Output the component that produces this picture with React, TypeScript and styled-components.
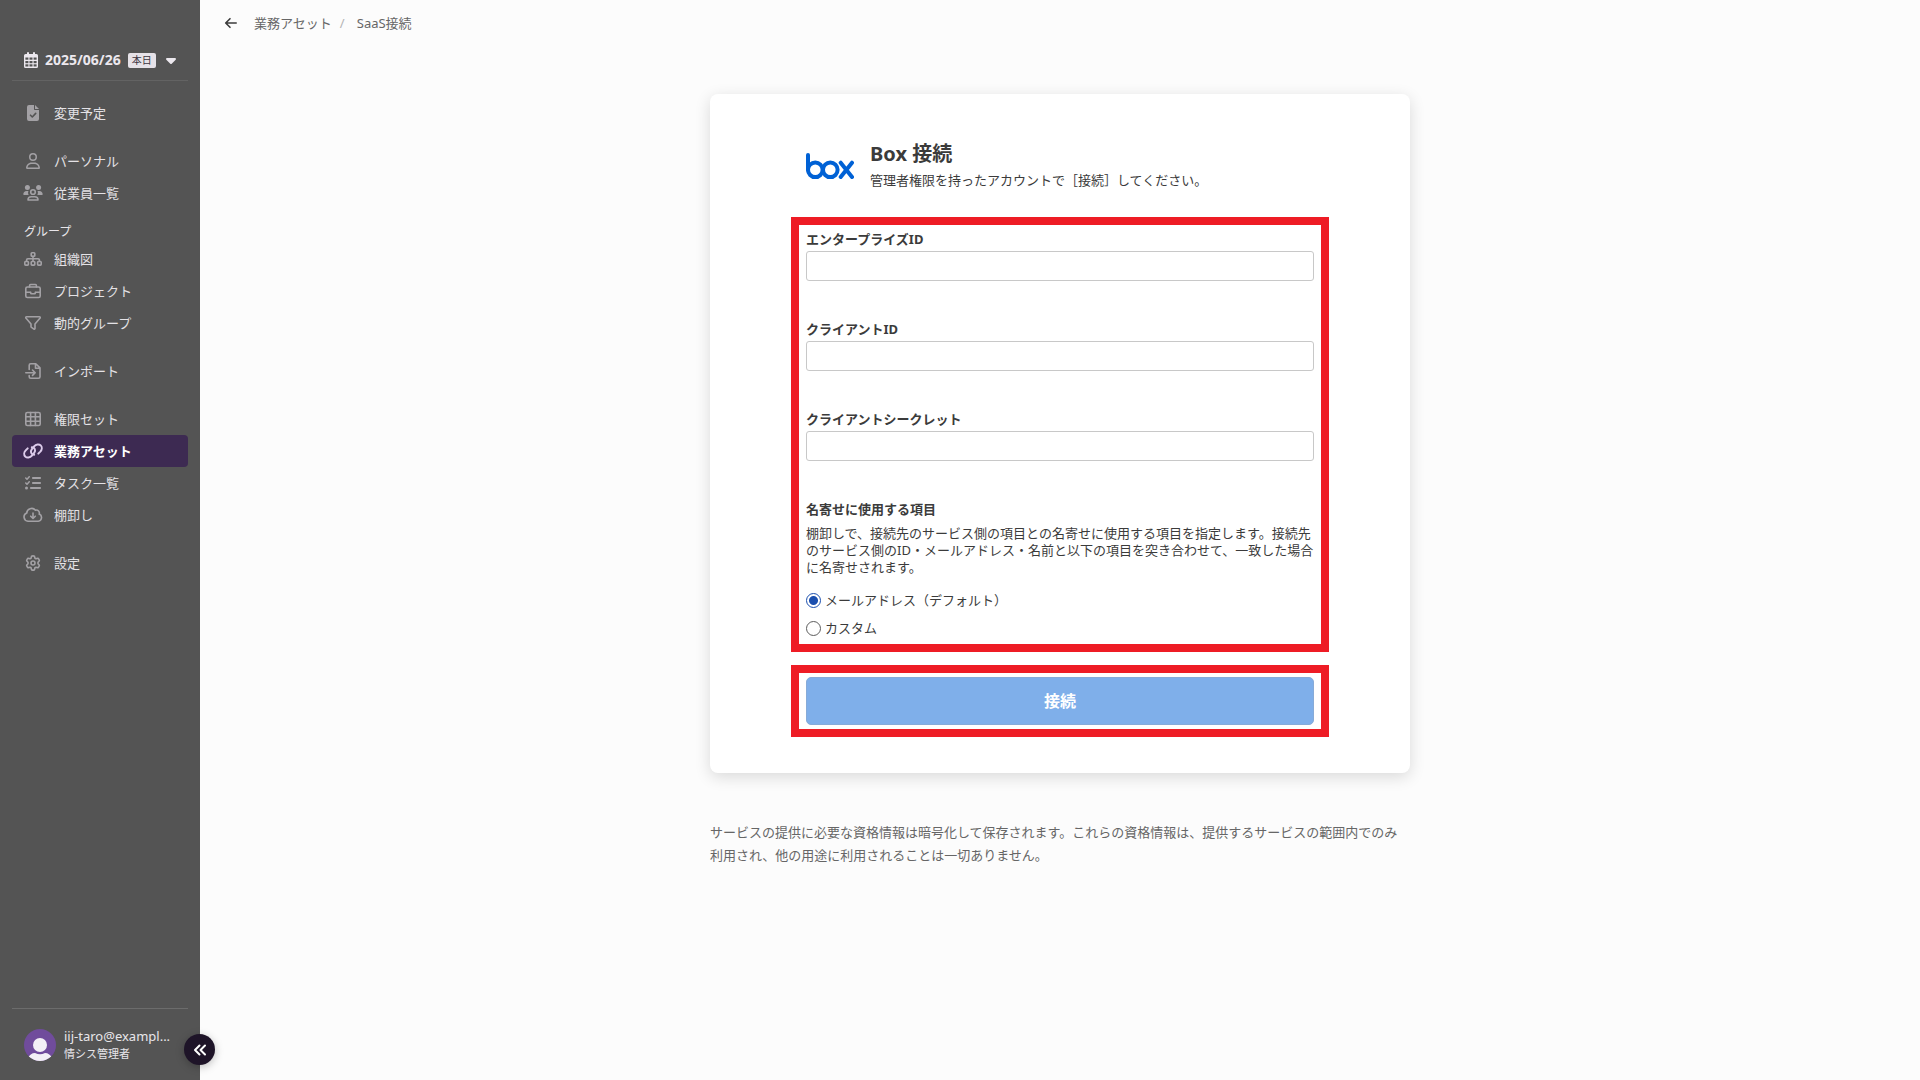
import React, { useState } from "react";
import styled, { createGlobalStyle, css } from "styled-components";
import { FaListCheck, FaRegUser, FaCaretDown } from "react-icons/fa6";

const GlobalStyle = createGlobalStyle`
  *, *::before, *::after { box-sizing: border-box; }
  body {
    margin: 0;
    background: #fcfcfc;
    color: #3b3b3b;
    font-family: "Noto Sans", "Noto Sans CJK JP", sans-serif;
    font-size: 13px;
    line-height: 20px;
    text-spacing-trim: space-all;
  }
  h1, p, ul { margin: 0; padding: 0; }
  ul { list-style: none; }
  button, input { font: inherit; }
`;

const Shell = styled.div`
  display: grid;
  grid-template-columns: 200px minmax(0, 1fr);
  min-height: 100vh;
`;

const Sidebar = styled.aside`
  position: sticky;
  top: 0;
  display: flex;
  flex-direction: column;
  height: 100vh;
  padding: 0 12px;
  background: #545454;
  color: #e8e6ea;
`;

const DateButton = styled.button`
  display: flex;
  align-items: center;
  gap: 7px;
  height: 81px;
  padding: 40px 12px 0;
  border: 0;
  border-bottom: 1px solid #636363;
  background: none;
  color: #ece8ee;
  font-size: 14px;
  font-weight: 700;
  white-space: nowrap;
  cursor: pointer;
  svg { flex: none; }
`;

const TodayBadge = styled.span`
  flex: none;
  padding: 0 4px;
  border-radius: 2px;
  background: #e6e2e8;
  color: #3c3541;
  font-size: 10px;
  font-weight: 400;
  line-height: 15px;
`;

const Nav = styled.nav`
  display: flex;
  flex: 1;
  flex-direction: column;
  gap: 16px;
  padding-top: 16px;
`;

const NavGroup = styled.div<{ $titled?: boolean }>`
  margin-top: ${(p) => (p.$titled ? "-16px" : "0")};
`;

const GroupTitle = styled.h2`
  margin: 0;
  padding: 14px 12px 2px;
  font-size: 12px;
  font-weight: 400;
  line-height: 18px;
`;

const NavLink = styled.a<{ $active?: boolean }>`
  display: flex;
  align-items: center;
  gap: 12px;
  height: 32px;
  padding: 0 12px;
  border-radius: 4px;
  color: #e4e2e6;
  text-decoration: none;
  svg { flex: none; color: #a3a1a5; }
  ${(p) =>
    p.$active &&
    css`
      background: #3d2a52;
      color: #fff;
      font-weight: 700;
      svg { color: #dccbea; }
    `}
`;

const IconSlot = styled.span`
  display: flex;
  justify-content: center;
  width: 18px;
`;

const UserPanel = styled.div`
  display: flex;
  align-items: center;
  gap: 8px;
  height: 72px;
  padding: 0 12px;
  border-top: 1px solid #6c6c6c;
`;

const UserText = styled.div`
  min-width: 0;
  white-space: nowrap;
`;

const UserMail = styled.p`
  line-height: 18px;
`;

const UserRole = styled.p`
  font-size: 11px;
  line-height: 17px;
`;

const CollapseButton = styled.button`
  position: absolute;
  right: -15px;
  bottom: 15px;
  display: flex;
  align-items: center;
  justify-content: center;
  width: 31px;
  height: 31px;
  padding: 0;
  border: 0;
  border-radius: 50%;
  background: #1e1428;
  color: #fff;
  box-shadow: 0 2px 8px rgba(0, 0, 0, 0.25);
  cursor: pointer;
`;

const Main = styled.main`
  display: flex;
  flex-direction: column;
`;

const Breadcrumb = styled.nav`
  display: flex;
  align-items: center;
  height: 46px;
  padding: 0 24px;
  color: #666;
  a { color: inherit; text-decoration: none; }
`;

const BackButton = styled.button`
  display: flex;
  margin-right: 16px;
  padding: 0;
  border: 0;
  background: none;
  color: #3b3b3b;
  cursor: pointer;
`;

const Slash = styled.span`
  width: 25px;
  padding-left: 8px;
  color: #b4b4b4;
`;

const Content = styled.div`
  width: 100%;
  max-width: 700px;
  margin: 48px auto;
`;

const Card = styled.section`
  padding: 46px 81px 36px;
  border-radius: 8px;
  background: #fff;
  box-shadow: 0 4px 16px rgba(0, 0, 0, 0.14);
`;

const CardHeader = styled.header`
  display: flex;
  align-items: center;
  gap: 16px;
  padding: 0 15px;
  margin-bottom: 27px;
`;

const Title = styled.h1`
  margin-bottom: 2px;
  font-size: 20px;
  font-weight: 700;
  line-height: 28px;
`;

const Lead = styled.p`
  line-height: 20px;
`;

const Highlight = styled.div`
  padding: 4px 7px 6px;
  border: 8px solid #ee1c25;
`;

const SubmitHighlight = styled(Highlight)`
  margin-top: 13px;
  padding: 4px 7px;
`;

const Field = styled.div`
  display: flex;
  flex-direction: column;
  gap: 2px;
  margin-bottom: 38px;
`;

const Label = styled.label`
  font-weight: 700;
`;

const TextInput = styled.input`
  width: 100%;
  height: 30px;
  padding: 0 8px;
  border: 1px solid #c8c8c8;
  border-radius: 3px;
  background: #fff;
  outline: none;
  &:focus { border-color: #1b4fae; }
`;

const Options = styled.fieldset`
  display: flex;
  flex-direction: column;
  gap: 8px;
  min-width: 0;
  margin: 0;
  padding: 0;
  border: 0;
`;

const Legend = styled.legend`
  margin-bottom: 6px;
  padding: 0;
  font-weight: 700;
`;

const Help = styled.p`
  margin-bottom: 6px;
  line-height: 17px;
`;

const RadioLabel = styled.label`
  display: flex;
  align-items: center;
  gap: 4px;
`;

const Radio = styled.input`
  appearance: none;
  width: 15px;
  height: 15px;
  margin: 0;
  border: 1px solid #5c5c5c;
  border-radius: 50%;
  background: #fff;
  &:checked {
    border-color: #1b4fae;
    background: radial-gradient(circle, #1b4fae 0 4px, #fff 5px);
  }
`;

const Submit = styled.button`
  display: block;
  width: 100%;
  height: 48px;
  border: 1px solid #87abd8;
  border-radius: 5px;
  background: #7fafea;
  color: #fff;
  font-size: 16px;
  font-weight: 700;
`;

const Note = styled.p`
  margin-top: 48px;
  color: #666;
  line-height: 23px;
`;

type IconProps = { children: React.ReactNode; width?: number; height?: number; box?: string };

const Line = ({ children, width = 16, height = 16, box = "0 0 16 16" }: IconProps) => (
  <svg
    width={width}
    height={height}
    viewBox={box}
    fill="none"
    stroke="currentColor"
    strokeWidth="1.6"
    strokeLinecap="round"
    strokeLinejoin="round"
    aria-hidden="true"
  >
    {children}
  </svg>
);

const CalendarIcon = () => (
  <Line width={14} box="0 0 14 16">
    <path d="M1.500 2h11A1.500 1.500 0 0 1 14 3.500v11a1.500 1.500 0 0 1-1.500 1.500h-11A1.500 1.500 0 0 1 0 14.500v-11A1.500 1.500 0 0 1 1.500 2z" fill="currentColor" stroke="none" />
    <path d="M4 1v2M10 1v2" strokeWidth="2" />
    <g fill="#545454" stroke="none">
      {[5.5, 9, 12.3].map((y) =>
        [1.4, 5.5, 9.6].map((x) => <rect key={`${x}-${y}`} x={x} y={y} width="3" height="2.200" />)
      )}
    </g>
  </Line>
);

const FileCheckIcon = () => (
  <Line>
    <path d="M4 0h5v4.2a.8.8 0 0 0 .8.8H14v9a2 2 0 0 1-2 2H4a2 2 0 0 1-2-2V2a2 2 0 0 1 2-2z" fill="currentColor" stroke="none" />
    <path d="M10 0l4 4h-4z" fill="currentColor" stroke="none" />
    <path d="M5.500 10.200l1.800 1.800 3.400-3.600" stroke="#545454" />
  </Line>
);

const UsersIcon = () => (
  <Line width={20} box="0 0 20 16">
    <g fill="currentColor" stroke="none">
      <circle cx="4.400" cy="2.600" r="2.500" />
      <circle cx="15.600" cy="2.600" r="2.500" />
      <path d="M.3 9.200c0-1.900 1.400-3.200 3.200-3.200h2c-.7 1.300-.5 2.800.2 4H1a.8.8 0 0 1-.7-.8z" />
      <path d="M19.700 9.200c0-1.900-1.400-3.200-3.200-3.200h-2c.7 1.300.5 2.800-.2 4H19a.8.8 0 0 0 .7-.8z" />
    </g>
    <circle cx="10" cy="7" r="2.300" />
    <path d="M5 15c0-2 1.400-3.200 3.200-3.200h3.600c1.800 0 3.200 1.200 3.200 3.200z" />
  </Line>
);

const SitemapIcon = () => (
  <Line width={18} height={14} box="0 0 18 14">
    <rect x="7.200" y=".8" width="3.600" height="3.400" rx=".8" />
    <rect x=".8" y="9.500" width="3.600" height="3.600" rx=".8" />
    <rect x="7.200" y="9.500" width="3.600" height="3.600" rx=".8" />
    <rect x="13.600" y="9.500" width="3.600" height="3.600" rx=".8" />
    <path d="M9 4.200v5M2.600 9V8a1.200 1.200 0 0 1 1.200-1.200h10.400A1.200 1.200 0 0 1 15.400 8v1" />
  </Line>
);

const BriefcaseIcon = () => (
  <Line>
    <rect x=".8" y="4" width="14.400" height="10.500" rx="1.600" />
    <path d="M4.600 4V2.500c0-.6.4-1 1-1h4.800c.6 0 1 .4 1 1V4M.8 9.200h4.700M10.500 9.200h4.700M5.700 9.200v.8c0 .4.300.7.700.7h3.200c.4 0 .7-.3.700-.7v-.8" />
  </Line>
);

const FilterIcon = () => (
  <Line>
    <path d="M1.500 1.800h13c.7 0 1 .8.6 1.300L10 9v4.500c0 .6-.6.900-1.100.6l-2.400-1.700a1.200 1.200 0 0 1-.5-1V9L.9 3.100c-.4-.5-.1-1.300.6-1.300z" />
  </Line>
);

const ImportIcon = () => (
  <Line>
    <path d="M4.200 6.500V2.300c0-.8.600-1.500 1.500-1.500h5.100l4.200 4.100v8.800c0 .8-.7 1.500-1.500 1.500H5.700c-.9 0-1.500-.7-1.500-1.500v-1.200M10.500 1v4.300h4.300" />
    <path d="M.8 9.700h9M7.500 7l2.700 2.700-2.700 2.700" />
  </Line>
);

const TableIcon = () => (
  <Line>
    <rect x=".8" y="1.500" width="14.400" height="13" rx="1.600" />
    <path d="M.8 5.800h14.400M.8 10.200h14.400M5.600 1.500v13M10.400 1.500v13" />
  </Line>
);

const LinkIcon = () => (
  <Line width={20} box="0 0 20 16">
    <g strokeWidth="2">
      <path d="M11.200 11.700C8.200 11.700 7 8.600 8.700 6.300l2.400-3C13 1 16.200.9 17.700 2.400c1.600 1.600 1.400 4.300-.4 6.200l-2 2" />
      <path d="M8.800 4.300c3 0 4.200 3.100 2.500 5.400l-2.400 3C7 15 3.800 15.100 2.300 13.600.7 12 .9 9.300 2.700 7.400l2-2" />
    </g>
  </Line>
);

const CloudIcon = () => (
  <Line width={20} box="0 0 20 16">
    <path d="M5 14.200a4.200 4.200 0 0 1-1.300-8.100A5 5 0 0 1 12.500 3.200a3 3 0 0 1 3.700 3.900 3.700 3.700 0 0 1-.9 7.100z" />
    <path d="M10 6v5.300M7.700 9.200l2.300 2.300 2.300-2.300" />
  </Line>
);

const GearIcon = () => (
  <Line>
    <path d="M6.500 1.300Q8 .5 9.500 1.300L9.900 3.200l1.100.6 1.900-.6q1.400 1 1.500 2.600L13 7.200v1.600l1.400 1.400q-.2 1.600-1.500 2.600l-1.900-.6-1.100.6-.4 1.900q-1.500.8-3 0l-.4-1.900-1.100-.6-1.900.6q-1.300-1-1.500-2.600L3 8.800V7.200L1.600 5.800q.2-1.600 1.500-2.600l1.900.6 1.100-.6z" />
    <circle cx="8" cy="8" r="2" />
  </Line>
);

const ArrowLeftIcon = () => (
  <Line width={14} height={14} box="0 0 14 14">
    <path d="M12.200 7H1.800M6 2.700L1.700 7 6 11.300" />
  </Line>
);

const ChevronsIcon = () => (
  <Line width={14} height={14} box="0 0 14 14">
    <path d="M6.500 2.500L2 7l4.500 4.500M12 2.500L7.500 7l4.500 4.500" strokeWidth="2" />
  </Line>
);

const Avatar = () => (
  <svg width="32" height="32" viewBox="0 0 32 32" aria-hidden="true">
    <defs>
      <clipPath id="avatar-clip">
        <circle cx="16" cy="16" r="16" />
      </clipPath>
    </defs>
    <g clipPath="url(#avatar-clip)">
      <rect width="32" height="32" fill="#704c9c" />
      <circle cx="16" cy="16" r="7" fill="#f3f0f6" />
      <path d="M4 29c1-3 4-5 7-5q5 2.500 10 0c3 0 6 2 7 5v3H4z" fill="#f3f0f6" />
    </g>
  </svg>
);

const BoxLogo = () => (
  <svg width="48" height="48" viewBox="0 0 48 48" role="img" aria-label="Box">
    <g fill="none" stroke="#0061d5" strokeWidth="4" strokeLinecap="round">
      <path d="M2 14v15" />
      <circle cx="9.300" cy="28.800" r="7.300" />
      <circle cx="24.300" cy="28.800" r="7.300" />
      <path d="M34.700 21.700L46 36M46 21.700L34.700 36" />
    </g>
  </svg>
);

type NavItem = { label: string; icon: React.ReactNode; active?: boolean };

const navGroups: { title?: string; items: NavItem[] }[] = [
  { items: [{ label: "変更予定", icon: <FileCheckIcon /> }] },
  {
    items: [
      { label: "パーソナル", icon: <FaRegUser size={16} /> },
      { label: "従業員一覧", icon: <UsersIcon /> },
    ],
  },
  {
    title: "グループ",
    items: [
      { label: "組織図", icon: <SitemapIcon /> },
      { label: "プロジェクト", icon: <BriefcaseIcon /> },
      { label: "動的グループ", icon: <FilterIcon /> },
    ],
  },
  { items: [{ label: "インポート", icon: <ImportIcon /> }] },
  {
    items: [
      { label: "権限セット", icon: <TableIcon /> },
      { label: "業務アセット", icon: <LinkIcon />, active: true },
      { label: "タスク一覧", icon: <FaListCheck size={16} /> },
      { label: "棚卸し", icon: <CloudIcon /> },
    ],
  },
  { items: [{ label: "設定", icon: <GearIcon /> }] },
];

const fields = [
  { id: "enterprise-id", label: "エンタープライズID", type: "text" },
  { id: "client-id", label: "クライアントID", type: "text" },
  { id: "client-secret", label: "クライアントシークレット", type: "password" },
];

const matchOptions = [
  { value: "mail", label: "メールアドレス（デフォルト）" },
  { value: "custom", label: "カスタム" },
];

export default function App() {
  const [match, setMatch] = useState("mail");

  return (
    <>
      <GlobalStyle />
      <Shell>
        <Sidebar>
          <DateButton type="button">
            <CalendarIcon />
            2025/06/26
            <TodayBadge>本日</TodayBadge>
            <FaCaretDown size={16} />
          </DateButton>
          <Nav>
            {navGroups.map((group, i) => (
              <NavGroup key={i} $titled={!!group.title}>
                {group.title && <GroupTitle>{group.title}</GroupTitle>}
                <ul>
                  {group.items.map((item) => (
                    <li key={item.label}>
                      <NavLink href="#" $active={item.active}>
                        <IconSlot>{item.icon}</IconSlot>
                        {item.label}
                      </NavLink>
                    </li>
                  ))}
                </ul>
              </NavGroup>
            ))}
          </Nav>
          <UserPanel>
            <Avatar />
            <UserText>
              <UserMail>iij-taro@exampl...</UserMail>
              <UserRole>情シス管理者</UserRole>
            </UserText>
          </UserPanel>
          <CollapseButton type="button" aria-label="メニューを閉じる">
            <ChevronsIcon />
          </CollapseButton>
        </Sidebar>
        <Main>
          <Breadcrumb>
            <BackButton type="button" aria-label="戻る">
              <ArrowLeftIcon />
            </BackButton>
            <a href="#">業務アセット</a>
            <Slash>/</Slash>
            <span>SaaS接続</span>
          </Breadcrumb>
          <Content>
            <Card>
              <CardHeader>
                <BoxLogo />
                <div>
                  <Title>Box 接続</Title>
                  <Lead>管理者権限を持ったアカウントで［接続］してください。</Lead>
                </div>
              </CardHeader>
              <form onSubmit={(e) => e.preventDefault()}>
                <Highlight>
                  {fields.map((f) => (
                    <Field key={f.id}>
                      <Label htmlFor={f.id}>{f.label}</Label>
                      <TextInput id={f.id} type={f.type} />
                    </Field>
                  ))}
                  <Options>
                    <Legend>名寄せに使用する項目</Legend>
                    <Help>
                      棚卸しで、接続先のサービス側の項目との名寄せに使用する項目を指定します。接続先のサービス側のID・メールアドレス・名前と以下の項目を突き合わせて、一致した場合に名寄せされます。
                    </Help>
                    {matchOptions.map((o) => (
                      <RadioLabel key={o.value}>
                        <Radio
                          type="radio"
                          name="match"
                          value={o.value}
                          checked={match === o.value}
                          onChange={() => setMatch(o.value)}
                        />
                        {o.label}
                      </RadioLabel>
                    ))}
                  </Options>
                </Highlight>
                <SubmitHighlight>
                  <Submit type="submit">接続</Submit>
                </SubmitHighlight>
              </form>
            </Card>
            <Note>
              サービスの提供に必要な資格情報は暗号化して保存されます。これらの資格情報は、提供するサービスの範囲内でのみ利用され、他の用途に利用されることは一切ありません。
            </Note>
          </Content>
        </Main>
      </Shell>
    </>
  );
}
